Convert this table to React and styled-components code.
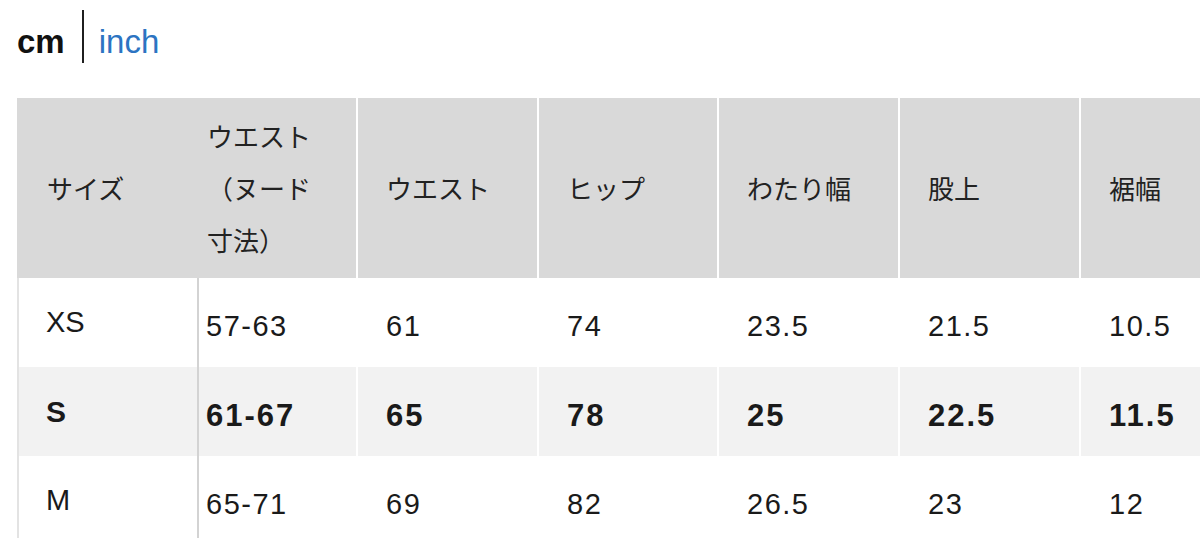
import React from 'react';
import styled, { createGlobalStyle, css } from 'styled-components';

const GlobalStyle = createGlobalStyle`
  body {
    margin: 0;
    background: #fff;
    font-family: "Liberation Sans", "Noto Sans CJK JP", sans-serif;
    color: #1a1a1a;
  }
`;

// 7 columns: size label, nude waist, then five measurements (last one runs off the screen)
const columns = css`
  display: grid;
  grid-template-columns: 182px 159px 181px 180px 181px 181px 181px;
`;

const Page = styled.div`
  width: 1200px;
  height: 538px;
  overflow: hidden;
  box-sizing: border-box;
  padding: 10px 0 0 17px;
`;

const UnitToggle = styled.div`
  display: flex;
  align-items: center;
  height: 53px;
  font-size: 33px;
  line-height: 1;
`;

const UnitActive = styled.span`
  font-weight: 700;
  color: #111;
  padding-top: 9px;
`;

const UnitDivider = styled.span`
  width: 2px;
  height: 53px;
  background: #1f1f1f;
  margin: 0 15px 0 17px;
`;

const UnitLink = styled.a`
  color: #2c74c2;
  text-decoration: none;
  padding-top: 9px;
  cursor: pointer;
`;

const SizeTable = styled.div`
  margin-top: 35px;
  width: max-content;
`;

const HeadRow = styled.div`
  ${columns}
  height: 180px;
`;

const HeadCell = styled.div`
  display: flex;
  align-items: center;
  box-sizing: border-box;
  background: #d9d9d9;
  border-right: 2px solid ${p => (p.$divider ? '#fff' : 'transparent')};
  padding-left: ${p => p.$pad}px;
  font-family: "Noto Sans CJK JP", sans-serif;
  font-size: 26px;
  line-height: 52px;
  color: #222;
`;

const BodyRow = styled.div`
  ${columns}
  height: 89px;
  background: ${p => (p.$striped ? '#f2f2f2' : '#fff')};
  font-weight: ${p => (p.$bold ? 700 : 400)};
`;

const LabelCell = styled.div`
  display: flex;
  align-items: center;
  box-sizing: border-box;
  border-left: 2px solid #e3e3e3;
  border-right: 2px solid #d3d3d3;
  padding-left: 27px;
  font-size: ${p => (p.$bold ? 30 : 29)}px;
`;

const DataCell = styled.div`
  display: flex;
  align-items: center;
  box-sizing: border-box;
  border-right: 2px solid #fff;
  padding: 8px 0 0 ${p => p.$pad}px;
  font-size: ${p => (p.$bold ? 31 : 29)}px;
  letter-spacing: ${p => (p.$bold ? 2 : 1.5)}px;
`;

const headers = [
  { label: 'サイズ', pad: 30 },
  { label: <>ウエスト<br />（ヌード<br />寸法）</>, pad: 8, divider: true },
  { label: 'ウエスト', pad: 28, divider: true },
  { label: 'ヒップ', pad: 28, divider: true },
  { label: 'わたり幅', pad: 28, divider: true },
  { label: '股上', pad: 28, divider: true },
  { label: '裾幅', pad: 28, divider: true },
];

const rows = [
  { size: 'XS', values: ['57-63', '61', '74', '23.5', '21.5', '10.5'] },
  { size: 'S', values: ['61-67', '65', '78', '25', '22.5', '11.5'], selected: true },
  { size: 'M', values: ['65-71', '69', '82', '26.5', '23', '12'] },
];

export default function App() {
  return (
    <Page>
      <GlobalStyle />
      <UnitToggle>
        <UnitActive>cm</UnitActive>
        <UnitDivider />
        <UnitLink>inch</UnitLink>
      </UnitToggle>

      <SizeTable>
        <HeadRow>
          {headers.map((h, i) => (
            <HeadCell key={i} $pad={h.pad} $divider={h.divider}>
              <div>{h.label}</div>
            </HeadCell>
          ))}
        </HeadRow>

        {rows.map(row => (
          <BodyRow key={row.size} $striped={row.selected} $bold={row.selected}>
            <LabelCell $bold={row.selected}>{row.size}</LabelCell>
            {row.values.map((v, i) => (
              <DataCell key={i} $pad={i === 0 ? 7 : 28} $bold={row.selected}>
                {v}
              </DataCell>
            ))}
          </BodyRow>
        ))}
      </SizeTable>
    </Page>
  );
}
